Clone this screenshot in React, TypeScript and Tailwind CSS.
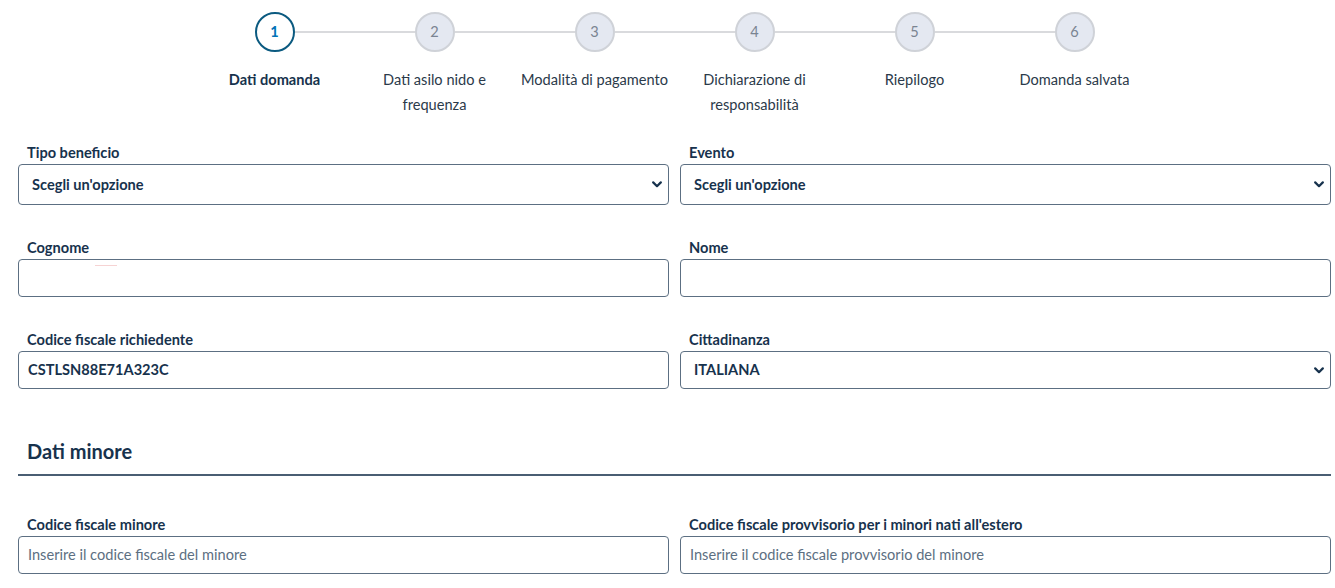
import React from "react";

const steps = [
  { n: 1, label: "Dati domanda" },
  { n: 2, label: "Dati asilo nido e frequenza" },
  { n: 3, label: "Modalità di pagamento" },
  { n: 4, label: "Dichiarazione di responsabilità" },
  { n: 5, label: "Riepilogo" },
  { n: 6, label: "Domanda salvata" },
];

function Chevron() {
  return (
    <svg width="10" height="7" viewBox="0 0 10 7" className="shrink-0">
      <path d="M1.2 1.4 L5 5.2 L8.8 1.4" fill="none" stroke="#17324d" strokeWidth="2.2" strokeLinecap="round" strokeLinejoin="round" />
    </svg>
  );
}

function Label({ children }: { children: React.ReactNode }) {
  return (
    <div className="pl-[9px] text-[14.6px] leading-[20px] font-bold text-[#17324d] mb-px">{children}</div>
  );
}

function SelectBox({ value, h }: { value: string; h: string }) {
  return (
    <div className={`${h} border border-[#5c6f82] rounded-[4px] flex items-center justify-between pl-[13px] pr-[6px] bg-white`}>
      <span className="text-[14.6px] font-bold text-[#17324d]">{value}</span>
      <Chevron />
    </div>
  );
}

function InputBox({ value, placeholder }: { value?: string; placeholder?: string }) {
  return (
    <div className="h-[38px] border border-[#5c6f82] rounded-[4px] flex items-center pl-[9px] bg-white">
      {value ? (
        <span className="text-[14.6px] font-bold text-[#17324d]">{value}</span>
      ) : (
        <span className="text-[14.6px] text-[#5c6f82]">{placeholder}</span>
      )}
    </div>
  );
}

export default function App() {
  return (
    <div className="bg-white min-h-[588px] pl-[18px] pr-[4px] font-['Lato',sans-serif] text-[#17324d]">
      {/* Stepper */}
      <div className="w-[960px] mx-auto pt-[12px]">
        <div className="flex items-center px-[60px]">
          {steps.map((s, i) => (
            <React.Fragment key={s.n}>
              {s.n === 1 ? (
                <div className="w-10 h-10 rounded-full border-2 border-[#0b5a80] bg-white flex items-center justify-center text-[14.6px] font-bold text-[#0073b7] shrink-0">
                  {s.n}
                </div>
              ) : (
                <div className="w-10 h-10 rounded-full border-2 border-[#cfd2d8] bg-[#e4e8f1] flex items-center justify-center text-[14.6px] text-[#7a8492] shrink-0">
                  {s.n}
                </div>
              )}
              {i < steps.length - 1 && <div className="flex-1 h-[2px] bg-[#d9dadd]" />}
            </React.Fragment>
          ))}
        </div>
        <div className="grid grid-cols-6 mt-[15px]">
          {steps.map((s) => (
            <div key={s.n} className="px-[6px] text-center">
              <span
                className={
                  s.n === 1
                    ? "text-[14.6px] leading-[24px] font-bold text-[#17324d]"
                    : "text-[14.6px] leading-[24px] text-[#2b3a4a]"
                }
              >
                {s.label}
              </span>
            </div>
          ))}
        </div>
      </div>

      {/* Form */}
      <div className="mt-[26px] grid grid-cols-2 gap-x-[11px]">
        <div>
          <Label>Tipo beneficio</Label>
          <SelectBox value="Scegli un'opzione" h="h-[41px]" />
        </div>
        <div>
          <Label>Evento</Label>
          <SelectBox value="Scegli un'opzione" h="h-[41px]" />
        </div>
      </div>

      <div className="mt-[33px] grid grid-cols-2 gap-x-[11px]">
        <div>
          <Label>Cognome</Label>
          <div className="relative">
            <InputBox />
            <div className="absolute left-[77px] top-[6px] w-[22px] h-px bg-[#f6d3d3]" />
          </div>
        </div>
        <div>
          <Label>Nome</Label>
          <InputBox />
        </div>
      </div>

      <div className="mt-[33px] grid grid-cols-2 gap-x-[11px]">
        <div>
          <Label>Codice fiscale richiedente</Label>
          <InputBox value="CSTLSN88E71A323C" />
        </div>
        <div>
          <Label>Cittadinanza</Label>
          <SelectBox value="ITALIANA" h="h-[38px]" />
        </div>
      </div>

      <div className="mt-[48px] pl-[9px] text-[20px] leading-[28px] font-bold text-[#17324d]">Dati minore</div>
      <div className="mt-[9px] h-[2px] bg-[#4a5e73]" />

      <div className="mt-[39px] grid grid-cols-2 gap-x-[11px]">
        <div>
          <Label>Codice fiscale minore</Label>
          <InputBox placeholder="Inserire il codice fiscale del minore" />
        </div>
        <div>
          <Label>Codice fiscale provvisorio per i minori nati all'estero</Label>
          <InputBox placeholder="Inserire il codice fiscale provvisorio del minore" />
        </div>
      </div>
    </div>
  );
}
